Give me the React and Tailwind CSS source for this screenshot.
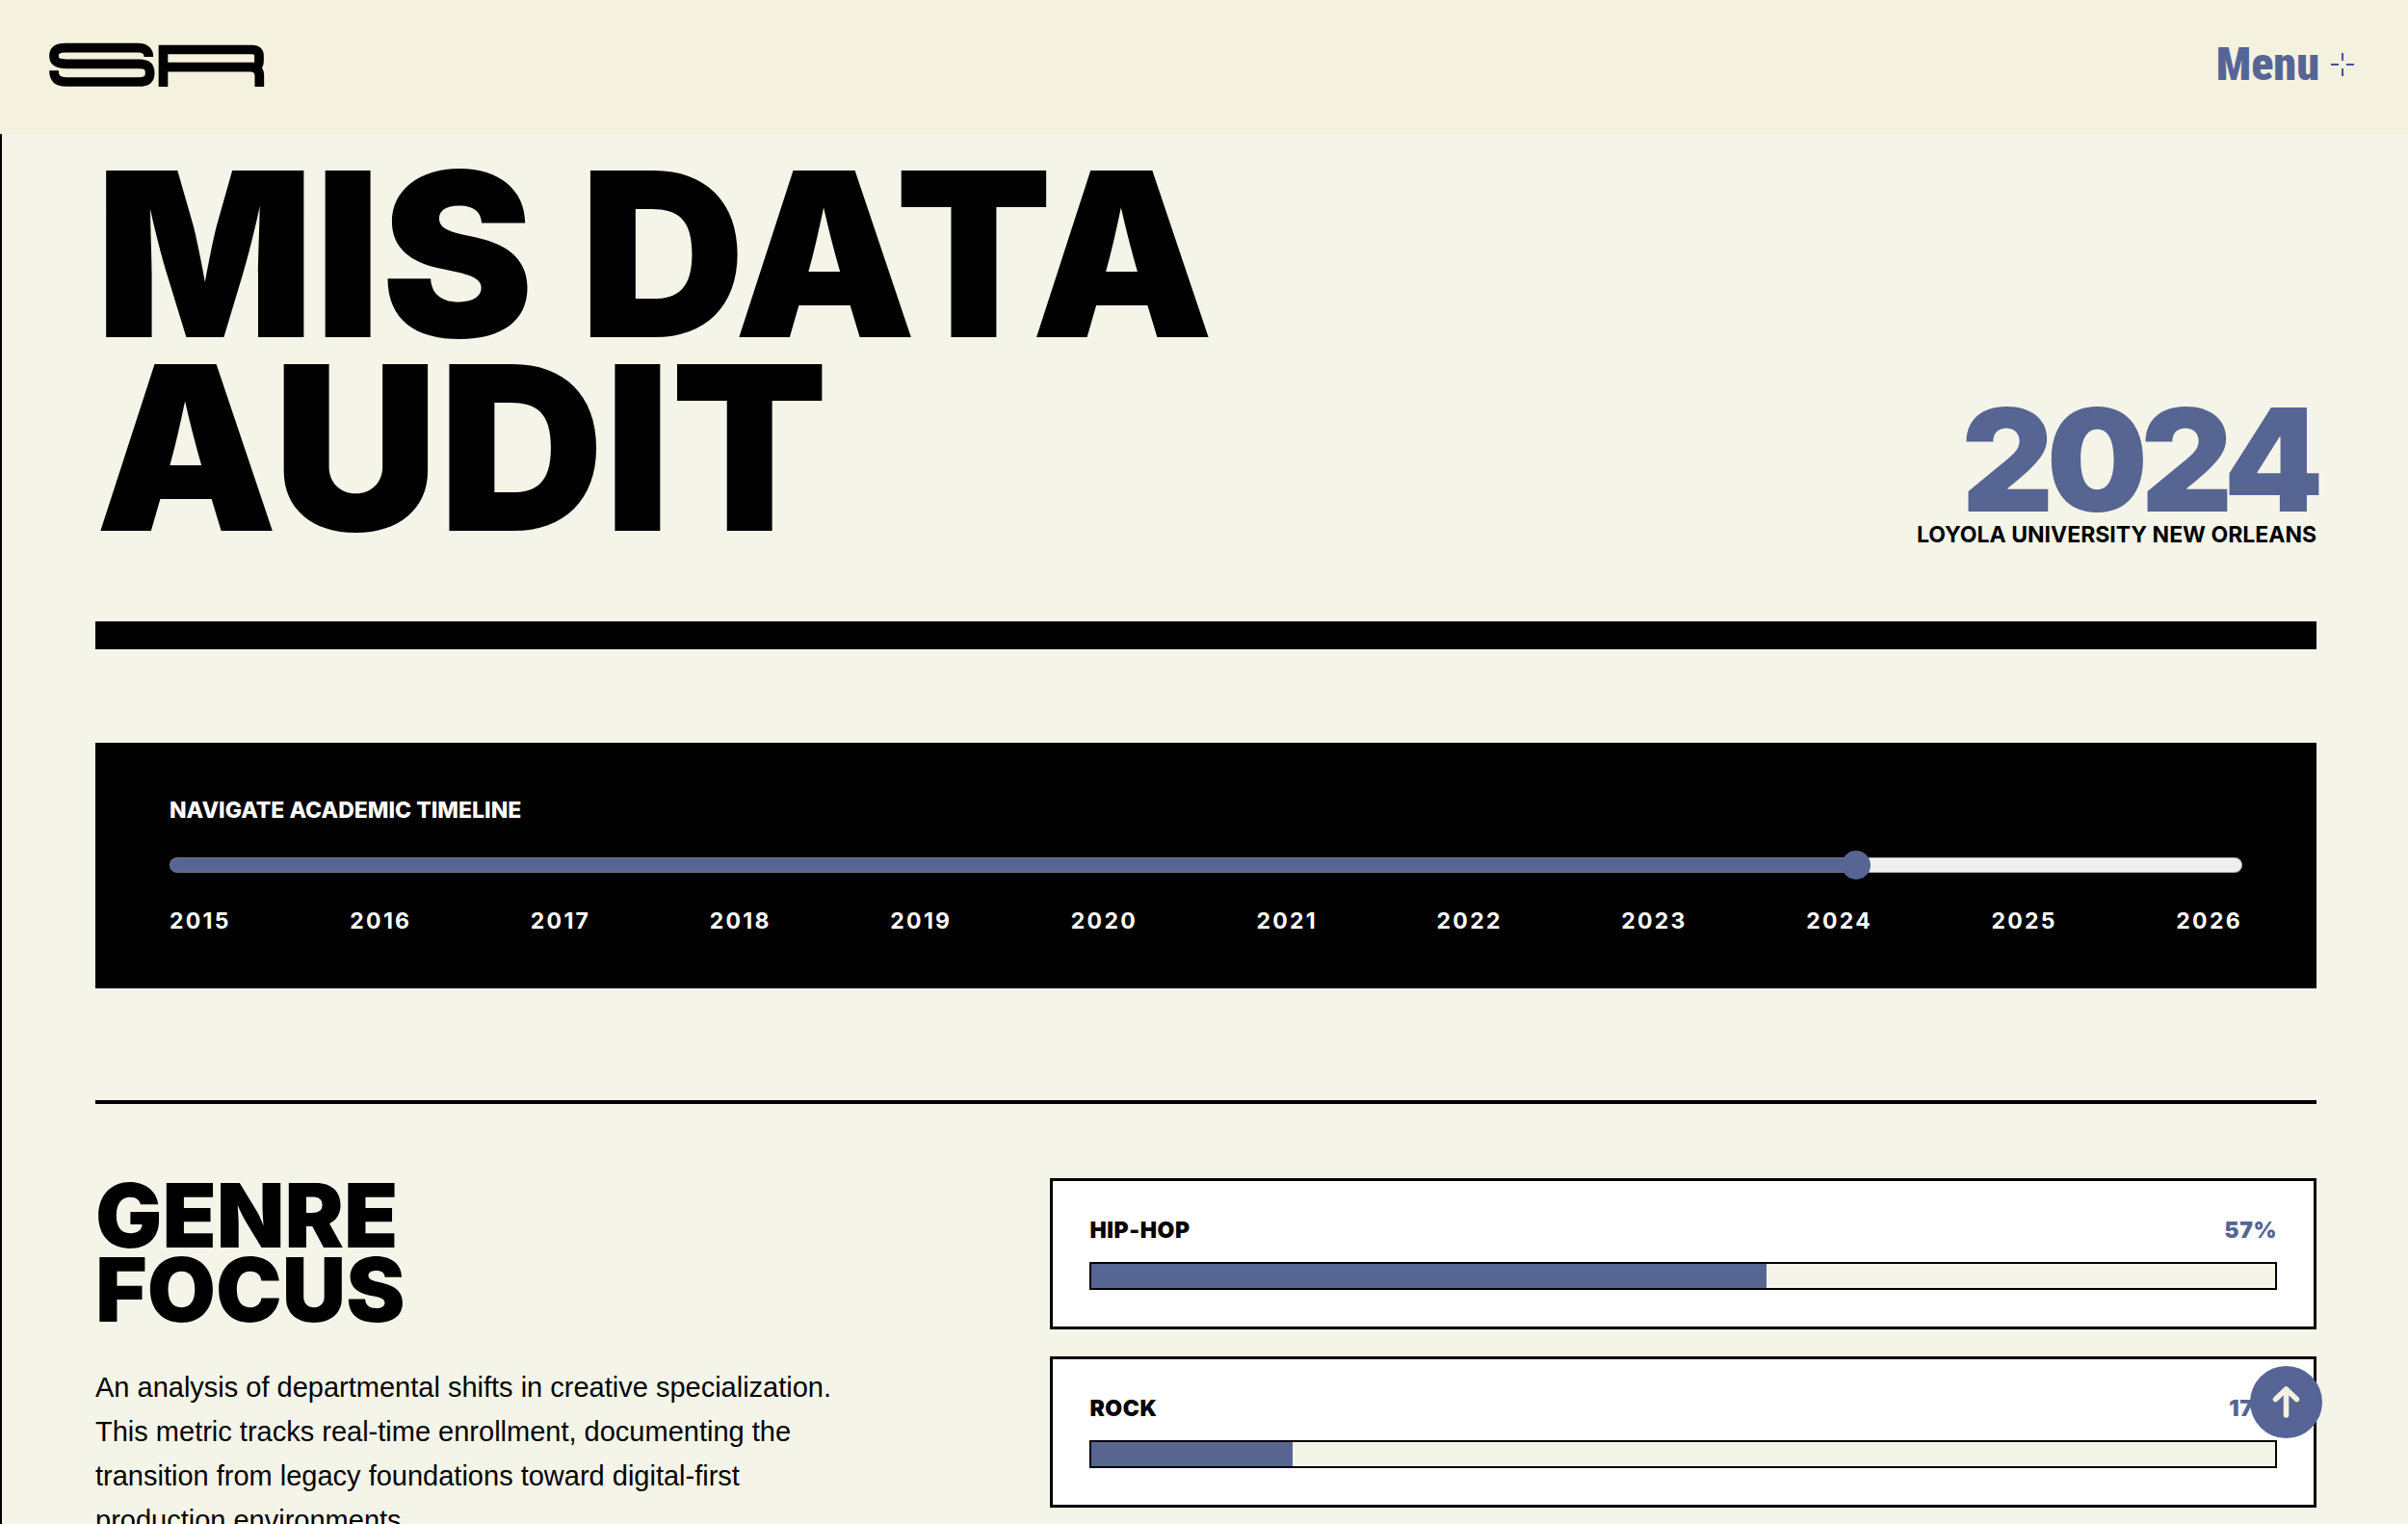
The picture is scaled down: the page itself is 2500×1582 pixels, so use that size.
import { useState } from 'react';

const FIRST_YEAR = 2015;
const LAST_YEAR = 2026;

const years = Array.from({ length: LAST_YEAR - FIRST_YEAR + 1 }, (_, i) => FIRST_YEAR + i);

const genres = [
  { name: 'Hip-Hop', value: 57 },
  { name: 'Rock', value: 17 },
];

function Logo() {
  return (
    <svg width="226" height="46" viewBox="0 0 678 138" fill="none" stroke="currentColor" aria-hidden="true">
      <path
        strokeWidth="29"
        d="M313 45C313 25 300 17 278 17H56C30 17 18 24 18 42C18 60 30 67 56 67H284C308 67 317 77 317 95C317 114 306 123 282 123H56C30 123 18 112 18 88"
      />
      <path
        strokeWidth="29"
        d="M358.5 138V22.5H635C651 22.5 657 30 657 42V56C657 70 651 77 637 77H358.5M630 77C650 77 658 88 658 104V138"
      />
    </svg>
  );
}

function Header() {
  return (
    <header className="sticky top-0 z-20 h-[139px] pl-[50px] pr-14 pb-1.5 flex items-center justify-between bg-[#f5f1df]">
      <a href="#top" aria-label="Home" className="text-black">
        <Logo />
      </a>
      <button type="button" className="flex items-center gap-3 text-[#566595]">
        <span className="font-['Roboto_Condensed',sans-serif] font-black text-[48px] leading-none">Menu</span>
        <svg width="24" height="24" viewBox="0 0 24 24" fill="none" stroke="#43538f" strokeWidth="2" aria-hidden="true">
          <path d="M12 0V8M12 16V24M0 12H8M16 12H24" />
        </svg>
      </button>
    </header>
  );
}

function Timeline({ year, onChange }) {
  const pct = ((year - FIRST_YEAR) / (LAST_YEAR - FIRST_YEAR)) * 100;
  const split = (fill, rest) => `linear-gradient(to right, ${fill} ${pct}%, ${rest} ${pct}%)`;

  return (
    <section className="mt-[97px] px-[77px] py-[58px] bg-black text-white text-[23px] leading-6">
      <label htmlFor="year" className="block font-extrabold uppercase">Navigate Academic Timeline</label>
      <input
        id="year"
        type="range"
        min={FIRST_YEAR}
        max={LAST_YEAR}
        value={year}
        onChange={(e) => onChange(Number(e.target.value))}
        style={{
          background: `${split('#566592', '#efefef')} padding-box, ${split('#71758a', '#b2b2b2')} border-box`,
        }}
        className="block mt-[37px] w-full h-4 appearance-none rounded-full border border-transparent cursor-pointer [&::-webkit-slider-thumb]:appearance-none [&::-webkit-slider-thumb]:size-[30px] [&::-webkit-slider-thumb]:rounded-full [&::-webkit-slider-thumb]:bg-[#566592]"
      />
      <div className="mt-[38px] flex justify-between font-bold tracking-widest">
        {years.map((y) => (
          <span key={y}>{y}</span>
        ))}
      </div>
    </section>
  );
}

function GenreCard({ name, value }) {
  return (
    <div className="border-[3px] border-black bg-white p-[38px]">
      <div className="flex justify-between text-[23px] leading-[26px] font-black tracking-wide">
        <span className="uppercase">{name}</span>
        <span className="text-[#566592]">{value}%</span>
      </div>
      <div className="mt-5 h-[29px] border-2 border-black bg-[#f4f4e8]">
        <div className="h-full bg-[#566592]" style={{ width: `${value}%` }} />
      </div>
    </div>
  );
}

export default function App() {
  const [year, setYear] = useState(2024);

  return (
    <div id="top" className="min-h-screen bg-[#f4f4e8] text-black font-['Inter',sans-serif]">
      <Header />
      <main className="border-l-2 border-black pl-[97px] pr-[95px] pt-6 pb-24">
        <div className="flex items-end justify-between pb-20 border-b-[29px] border-black">
          <h1 className="text-[238px] leading-[201px] font-black uppercase">
            MIS Data
            <br />
            Audit
          </h1>
          <div className="flex flex-col items-end">
            <p className="text-[148px] leading-[134px] font-black tracking-tighter text-[#566592]">{year}</p>
            <p className="text-[23px] leading-5 font-bold uppercase">Loyola University New Orleans</p>
          </div>
        </div>

        <Timeline year={year} onChange={setYear} />

        <section className="mt-[116px] pt-[77px] border-t-4 border-black grid grid-cols-[2fr_3fr] gap-[115px]">
          <div>
            <h2 className="text-[92px] leading-[77px] font-black uppercase">
              Genre
              <br />
              Focus
            </h2>
            <p className="mt-10 max-w-[800px] text-[29px] leading-[46px] font-['Liberation_Sans',sans-serif]">
              An analysis of departmental shifts in creative specialization. This metric tracks real-time
              enrollment, documenting the transition from legacy foundations toward digital-first production
              environments.
            </p>
          </div>
          <div className="flex flex-col gap-7">
            {genres.map((g) => (
              <GenreCard key={g.name} name={g.name} value={g.value} />
            ))}
          </div>
        </section>
      </main>

      <a
        href="#top"
        aria-label="Back to top"
        className="fixed right-[89px] bottom-[89px] z-10 size-[75px] rounded-full bg-[#566595] text-[#f5f1df] flex items-center justify-center"
      >
        <svg width="75" height="75" viewBox="0 0 75 75" fill="none" stroke="currentColor" strokeWidth="5.5" strokeLinecap="round" strokeLinejoin="round" aria-hidden="true">
          <path d="M37.5 51V24.5M26.5 34.5L37.5 24L48.5 34.5" />
        </svg>
      </a>
    </div>
  );
}
